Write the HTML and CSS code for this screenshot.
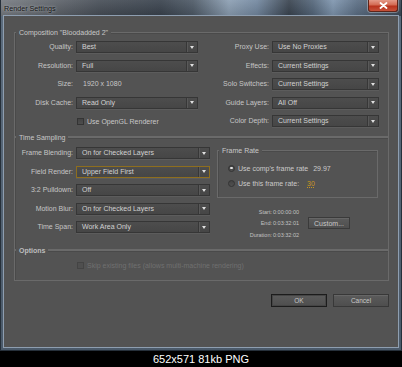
FILE: index.html
```html
<!DOCTYPE html>
<html>
<head>
<meta charset="utf-8">
<title>Render Settings</title>
<link rel="stylesheet" href="styles.css">
</head>
<body>
<div class="window">
  <div class="titlebar">
    <span class="title">Render Settings</span>
    <span class="close"><svg width="9" height="7" viewBox="0 0 9 7"><path d="M1.5 1 L7.5 6 M7.5 1 L1.5 6" stroke="#fff" stroke-width="1.8" stroke-linecap="round"/></svg></span>
  </div>
  <div class="client">
    <section class="group comp">
      <div class="group-title">Composition "Bloodadded 2"</div>
      <div class="comp-grid">
        <span class="lbl">Quality:</span><div class="dd"><span>Best</span><i class="arr"></i></div>
        <span class="lbl">Proxy Use:</span><div class="dd"><span>Use No Proxies</span><i class="arr"></i></div>
        <span class="lbl">Resolution:</span><div class="dd"><span>Full</span><i class="arr"></i></div>
        <span class="lbl">Effects:</span><div class="dd"><span>Current Settings</span><i class="arr"></i></div>
        <span class="lbl">Size:</span><span class="val">1920 x 1080</span>
        <span class="lbl">Solo Switches:</span><div class="dd"><span>Current Settings</span><i class="arr"></i></div>
        <span class="lbl">Disk Cache:</span><div class="dd"><span>Read Only</span><i class="arr"></i></div>
        <span class="lbl">Guide Layers:</span><div class="dd"><span>All Off</span><i class="arr"></i></div>
        <span class="lbl"></span><label class="check"><i class="box"></i>Use OpenGL Renderer</label>
        <span class="lbl">Color Depth:</span><div class="dd"><span>Current Settings</span><i class="arr"></i></div>
      </div>
    </section>

    <section class="group time">
      <div class="group-title">Time Sampling</div>
      <div class="time-row">
        <div class="time-grid">
          <span class="lbl">Frame Blending:</span><div class="dd"><span>On for Checked Layers</span><i class="arr"></i></div>
          <span class="lbl">Field Render:</span><div class="dd focus"><span>Upper Field First</span><i class="arr"></i></div>
          <span class="lbl">3:2 Pulldown:</span><div class="dd"><span>Off</span><i class="arr"></i></div>
          <span class="lbl">Motion Blur:</span><div class="dd"><span>On for Checked Layers</span><i class="arr"></i></div>
          <span class="lbl">Time Span:</span><div class="dd"><span>Work Area Only</span><i class="arr"></i></div>
        </div>
        <div class="time-right">
          <div class="group fr">
            <div class="group-title">Frame Rate</div>
            <div class="fr-list">
              <div class="radio-row"><i class="radio on"></i><span>Use comp's frame rate</span><span class="fr-val">29.97</span></div>
              <div class="radio-row"><i class="radio"></i><span>Use this frame rate:</span><span class="fr-val edit">30</span></div>
            </div>
          </div>
          <div class="timing">
            <button class="custom">Custom...</button>
            <span class="t-lbl">Start:</span><span class="t-val">0:00:00:00</span>
            <span class="t-lbl">End:</span><span class="t-val">0:03:32:01</span>
            <span class="t-lbl">Duration:</span><span class="t-val">0:03:32:02</span>
          </div>
        </div>
      </div>
    </section>

    <section class="group opts">
      <div class="group-title bold">Options</div>
      <label class="opt-row"><i class="box"></i>Skip existing files (allows multi-machine rendering)</label>
    </section>

    <div class="buttons">
      <button class="btn default">OK</button>
      <button class="btn">Cancel</button>
    </div>
  </div>
</div>
<div class="caption">652x571 81kb PNG</div>
</body>
</html>
```

FILE: styles.css
```css
html, body {
  margin: 0;
  padding: 0;
}
body {
  background: #000;
  width: 402px;
  height: 367px;
  overflow: hidden;
  font-family: "Liberation Sans", Arial, sans-serif;
}

.window {
  width: 402px;
  height: 351px;
  box-sizing: border-box;
  border: 1px solid #26303a;
  border-top: 0;
  background: linear-gradient(180deg, #5d6d7e, #4b5a6a);
  display: flex;
  flex-direction: column;
}

.titlebar {
  height: 16px;
  flex: none;
  display: flex;
  justify-content: space-between;
  align-items: flex-start;
  padding: 0 3px;
  background:
    linear-gradient(180deg, rgba(255,255,255,0.08), rgba(0,0,0,0.12)),
    linear-gradient(90deg, #777c82 0, #62676e 12%, #474e57 25%, #3a434e 40%, #4e5a67 48%, #8c9fb3 57%, #7388a0 64%, #3a4450 72%, #55677b 78%, #7f96af 83%, #5c6f85 89%, #3d4957 100%);
}

.title {
  font-size: 7.2px;
  line-height: 17px;
  color: #161616;
  text-shadow: 0 0 3px rgba(230,235,240,0.75);
}

.close {
  width: 30px;
  height: 12px;
  box-sizing: border-box;
  border: 1px solid #5e2419;
  border-top: 0;
  border-radius: 0 0 3px 3px;
  background: linear-gradient(180deg, #e49a88 0, #d36a52 45%, #b8321c 55%, #c5523a 100%);
  box-shadow: 0 0 0 1px rgba(255,255,255,0.3);
  display: flex;
  align-items: center;
  justify-content: center;
}

.client {
  flex: 1;
  margin: 0 3px 3px;
  box-sizing: border-box;
  padding: 16px 9px 7px 10px;
  background: #535353;
  box-shadow: 0 0 0 1px #8e9eb0;
  display: flex;
  flex-direction: column;
  color: #c8c8c8;
  font-size: 7px;
}

.group {
  border: 1px solid #6a6a6a;
  box-shadow: inset 1px 1px 0 #4a4a4a;
}
.group-title {
  font-size: 7px;
  line-height: 8px;
  margin: -4px 0 0 1px;
  padding: 0 3px;
  width: fit-content;
  background: #535353;
  color: #c8c8c8;
  white-space: nowrap;
}
.group-title.bold {
  font-weight: bold;
  color: #bdbdbd;
}

.comp-grid {
  display: grid;
  grid-template-columns: 61px 122px 74px 107px;
  grid-auto-rows: 12px;
  row-gap: 6.5px;
  margin-top: 4px;
  padding-bottom: 9px;
}

.lbl {
  text-align: right;
  padding-right: 3px;
  line-height: 12px;
  color: #c6c6c6;
  white-space: nowrap;
}
.val {
  line-height: 12px;
  padding-left: 7px;
  color: #c8c8c8;
  white-space: nowrap;
}

.dd {
  display: flex;
  align-items: stretch;
  justify-content: space-between;
  box-sizing: border-box;
  height: 12px;
  padding-left: 5px;
  border: 1px solid #363636;
  background: linear-gradient(180deg, #4d4d4d, #464646);
  box-shadow: 0 1px 0 #5c5c5c;
  color: #d2d2d2;
  line-height: 10px;
  white-space: nowrap;
}
.dd.focus {
  border-color: #8e6e1e;
}
.arr {
  flex: none;
  width: 10px;
  border-left: 1px solid #373737;
  box-shadow: inset 1px 0 0 #595959;
  display: flex;
  align-items: center;
  justify-content: center;
}
.arr::before {
  content: "";
  border-left: 2.5px solid transparent;
  border-right: 2.5px solid transparent;
  border-top: 3px solid #e0e0e0;
}

.check {
  display: flex;
  align-items: center;
  gap: 3px;
  padding-left: 1px;
  color: #c8c8c8;
  white-space: nowrap;
}
.box {
  flex: none;
  width: 7px;
  height: 7px;
  box-sizing: border-box;
  border: 1px solid #343434;
  background: linear-gradient(180deg, #444, #4d4d4d);
}

.time-row {
  display: flex;
  align-items: flex-start;
  margin-top: 5px;
  padding-bottom: 8.5px;
}
.time-grid {
  display: grid;
  grid-template-columns: 61px 134px;
  grid-auto-rows: 12px;
  row-gap: 6.5px;
}
.time-right {
  margin-left: 7px;
  margin-top: 3px;
  width: 161px;
}

.fr-list {
  margin-top: 8px;
  padding: 0 0 9px 10px;
  display: flex;
  flex-direction: column;
  gap: 5px;
}
.radio-row {
  display: flex;
  align-items: center;
  height: 10px;
  gap: 3px;
  white-space: nowrap;
  color: #cacaca;
}
.radio {
  flex: none;
  width: 7px;
  height: 7px;
  box-sizing: border-box;
  border-radius: 50%;
  border: 1px solid #333;
  background: linear-gradient(180deg, #444, #505050);
  display: flex;
  align-items: center;
  justify-content: center;
}
.radio.on::after {
  content: "";
  width: 2.5px;
  height: 2.5px;
  border-radius: 50%;
  background: #e2e2e2;
}
.fr-val {
  margin-left: 2px;
}
.fr-val.edit {
  margin-left: 5px;
  color: #c9961f;
  text-decoration: underline;
  text-decoration-style: dotted;
}

.timing {
  margin-top: 8px;
  display: grid;
  grid-template-columns: 56px 35px auto;
  grid-auto-rows: 11.5px;
  align-items: center;
  font-size: 5.5px;
  color: #c2c2c2;
}
.t-lbl {
  grid-column: 1;
  text-align: right;
  padding-right: 1px;
}
.t-val {
  white-space: nowrap;
}
.custom {
  grid-column: 3;
  grid-row: 2;
  width: 42px;
  height: 12px;
  margin: 0;
  padding: 0;
  font-family: inherit;
  font-size: 7px;
  color: #c8c8c8;
  background: linear-gradient(180deg, #5b5b5b, #4f4f4f);
  border: 1px solid #3a3a3a;
  box-shadow: inset 0 1px 0 #666;
}

.opts .opt-row {
  display: flex;
  align-items: center;
  gap: 3px;
  height: 9px;
  margin-top: 6px;
  padding: 0 0 9.5px 62px;
  color: #707070;
  white-space: nowrap;
}
.opts .box {
  border-color: #444;
  background: #4f4f4f;
}

.buttons {
  margin-top: 13px;
  display: flex;
  justify-content: flex-end;
  gap: 6px;
}
.btn {
  width: 56px;
  height: 13px;
  margin: 0;
  padding: 0;
  box-sizing: border-box;
  font-family: inherit;
  font-size: 6.5px;
  color: #c8c8c8;
  background: linear-gradient(180deg, #5b5b5b, #4e4e4e);
  border: 1px solid #383838;
  box-shadow: inset 0 1px 0 #666;
}
.btn.default {
  border-color: #1c1c1c;
  box-shadow: inset 0 0 0 1px #454545;
}

.caption {
  height: 16px;
  line-height: 16px;
  text-align: center;
  color: #fff;
  font-size: 11px;
  font-family: "Liberation Sans", Arial, sans-serif;
}
```
